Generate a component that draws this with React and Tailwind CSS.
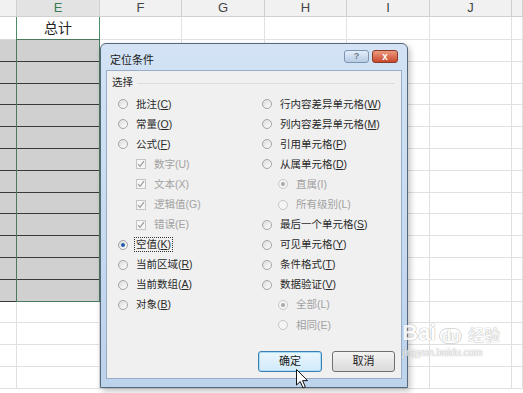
import React from "react";

const COLS = [17, 83, 82, 83, 82, 83, 82, 11];
const HEADS = ["", "E", "F", "G", "H", "I", "J", ""];

function Radio({ checked, disabled }) {
  return (
    <span
      className={`relative inline-flex w-[10px] h-[10px] shrink-0 rounded-full border items-center justify-center ${
        disabled ? "border-[#c8c8c8] bg-[#f4f4f4]" : "border-[#a4a4a4] bg-gradient-to-br from-[#dcdcdc] to-[#fdfdfd]"
      }`}
    >
      {checked && (
        <span className={`w-[4px] h-[4px] rounded-full ${disabled ? "bg-[#a8a8a8]" : "bg-[#1f5fa8]"}`}></span>
      )}
    </span>
  );
}

function Check() {
  return (
    <span className="inline-flex w-[10px] h-[10px] shrink-0 border border-[#c4c4c4] bg-[#f6f6f6] items-center justify-center">
      <svg width="8" height="8" viewBox="0 0 8 8">
        <path d="M1 4.2 L3 6.3 L7 1.2" fill="none" stroke="#9a9a9a" strokeWidth="1.2" />
      </svg>
    </span>
  );
}

function Label({ text, k }) {
  return (
    <span>
      {text}(<span className="underline">{k}</span>)
    </span>
  );
}

function Item({ kind = "radio", indent = 0, text, k, checked, disabled, focus }) {
  return (
    <div className="h-[20.1px] flex items-center" style={{ paddingLeft: indent }}>
      {kind === "check" ? <Check /> : <Radio checked={checked} disabled={disabled} />}
      <span
        className={`ml-[6px] px-[1px] leading-[13px] ${disabled ? "text-[#a2a2a2]" : "text-[#2a2a2a]"} ${
          focus ? "border border-dotted border-[#333]" : "border border-transparent"
        }`}
      >
        {disabled ? `${text}(${k})` : <Label text={text} k={k} />}
      </span>
    </div>
  );
}

export default function App() {
  const rows = [];
  // header row
  rows.push(
    <div key="h" className="flex h-[17px]">
      {COLS.map((w, i) => (
        <div
          key={i}
          style={{ width: w }}
          className={`shrink-0 flex items-center justify-center border-r border-b border-[#d0d0d0] text-[13px] font-['Liberation_Sans',sans-serif] ${
            i === 1 ? "bg-[#e3e3e3] text-[#3b7a53]" : "bg-[#f1f1f1] text-[#444]"
          }`}
        >
          {HEADS[i]}
        </div>
      ))}
    </div>
  );
  // row 1
  rows.push(
    <div key="r1" className="flex h-[23px]">
      {COLS.map((w, i) => (
        <div
          key={i}
          style={{ width: w }}
          className={`shrink-0 flex items-center justify-center border-r border-b ${
            i === 0 ? "border-r-[#4f8d66] border-b-[#dadada]" : i === 1 ? "border-[#4f8d66]" : "border-[#e2e2e2]"
          } text-[14px] text-[#222] bg-white`}
        >
          {i === 1 ? "总计" : ""}
        </div>
      ))}
    </div>
  );
  for (let r = 0; r < 16; r++) {
    const gray = r < 12;
    rows.push(
      <div key={r} className="flex h-[21.8px]">
        {COLS.map((w, i) => {
          const g = gray && i < 2;
          return (
            <div
              key={i}
              style={{ width: w }}
              className={`shrink-0 border-r border-b ${
                g ? "bg-[#d0d0d0] border-[#3a3a3a]" : "bg-white border-[#e0e0e0]"
              }`}
            ></div>
          );
        })}
      </div>
    );
  }

  return (
    <div className="relative w-[523px] h-[393px] overflow-hidden bg-white font-['Liberation_Sans','Noto_Sans_CJK_SC',sans-serif]">
      <div className="flex flex-col">{rows}</div>

      {/* selection outline */}
      <div className="absolute left-[16px] top-[39px] w-[84px] h-[263px] border border-[#4a7a5e]"></div>

      {/* dialog */}
      <div className="absolute left-[100px] top-[43px] w-[308px] h-[345px] rounded-t-[6px] border border-[#56677a] bg-gradient-to-b from-[#d3e3f5] to-[#bcd3ec] shadow-[2px_3px_6px_rgba(0,0,0,0.25)] flex flex-col px-[5px] pb-[8px]">
        <div className="h-[26px] flex items-start justify-between">
          <span className="mt-[10px] ml-[4px] text-[11px] leading-[13px] text-[#1b1b1b]">定位条件</span>
          <div className="flex gap-[3px] mt-[6px] mr-[4px]">
            <div className="w-[25px] h-[13px] rounded-[3px] border border-[#7e95b2] bg-gradient-to-b from-[#e4eefa] to-[#b7cbe4] flex items-center justify-center text-[9px] font-bold text-[#6b7a8c] leading-none">
              ?
            </div>
            <div className="w-[26px] h-[13px] rounded-[3px] border border-[#8a3b2a] bg-gradient-to-b from-[#ec9a7e] to-[#c8462b] flex items-center justify-center text-[10px] font-bold text-white leading-none">
              x
            </div>
          </div>
        </div>

        <div className="flex-1 bg-[#f0f0f0] border border-[#98aec8] flex flex-col text-[10.5px]">
          <div className="flex items-center mt-[5px] pl-[5px] pr-[6px] h-[12px]">
            <span className="text-[#2a2a2a] leading-[12px]">选择</span>
            <div className="flex-1 ml-[4px] mt-[2px] border-t border-[#dcdcdc]"></div>
          </div>

          <div className="flex mt-[6px] pl-[11px]">
            <div className="w-[144px] flex flex-col">
              <Item text="批注" k="C" />
              <Item text="常量" k="O" />
              <Item text="公式" k="F" />
              <Item kind="check" indent={18} text="数字" k="U" disabled />
              <Item kind="check" indent={18} text="文本" k="X" disabled />
              <Item kind="check" indent={18} text="逻辑值" k="G" disabled />
              <Item kind="check" indent={18} text="错误" k="E" disabled />
              <Item text="空值" k="K" checked focus />
              <Item text="当前区域" k="R" />
              <Item text="当前数组" k="A" />
              <Item text="对象" k="B" />
            </div>
            <div className="flex flex-col">
              <Item text="行内容差异单元格" k="W" />
              <Item text="列内容差异单元格" k="M" />
              <Item text="引用单元格" k="P" />
              <Item text="从属单元格" k="D" />
              <Item indent={16} text="直属" k="I" checked disabled />
              <Item indent={16} text="所有级别" k="L" disabled />
              <Item text="最后一个单元格" k="S" />
              <Item text="可见单元格" k="Y" />
              <Item text="条件格式" k="T" />
              <Item text="数据验证" k="V" />
              <Item indent={16} text="全部" k="L" checked disabled />
              <Item indent={16} text="相同" k="E" disabled />
            </div>
          </div>

          <div className="mt-auto flex justify-end gap-[10px] pr-[6px] pb-[6px] text-[11px]">
            <div className="w-[64px] h-[21px] rounded-[3px] border border-[#3c7fb1] bg-gradient-to-b from-[#eaf6fd] to-[#d2eafa] shadow-[inset_0_0_0_1px_#a8dcf7] flex items-center justify-center text-[#222]">
              确定
            </div>
            <div className="w-[63px] h-[21px] rounded-[3px] border border-[#707070] bg-gradient-to-b from-[#f3f3f3] to-[#dadada] flex items-center justify-center text-[#222]">
              取消
            </div>
          </div>
        </div>
      </div>

      {/* mouse cursor */}
      <svg className="absolute left-[296px] top-[369px]" width="13" height="20" viewBox="0 0 13 20">
        <path d="M0.5 0.5 L0.5 16 L4.2 12.5 L7 18.8 L9.3 17.8 L6.6 11.6 L11.5 11.6 Z" fill="#fff" stroke="#111" strokeWidth="1" />
      </svg>

      {/* watermark */}
      <div className="absolute left-[402px] top-[322px] flex flex-col items-start text-white [text-shadow:0_0_1px_#9c9c9c,0_0_1px_#9c9c9c] opacity-80">
        <div className="flex items-end gap-[3px]">
          <span className="text-[22px] font-bold leading-none">Bai</span>
          <span className="text-[14px] font-bold leading-none rounded-full border border-[#cfcfcf] px-[2px]">du</span>
          <span className="text-[16px] leading-none ml-[3px]">经验</span>
        </div>
        <span className="mt-[4px] text-[10px] leading-none">jingyan.baidu.com</span>
      </div>
    </div>
  );
}
